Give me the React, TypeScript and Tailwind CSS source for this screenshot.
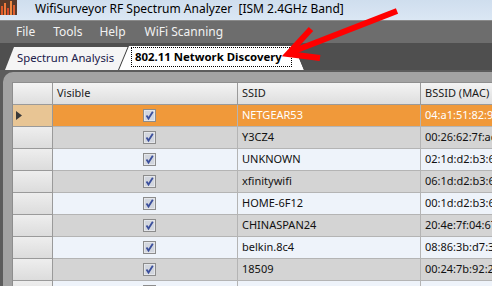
import { Fragment } from 'react';

const rows = [
  { ssid: 'NETGEAR53', bssid: '04:a1:51:82:92:4c' },
  { ssid: 'Y3CZ4', bssid: '00:26:62:7f:ac:1e' },
  { ssid: 'UNKNOWN', bssid: '02:1d:d2:b3:6a:20' },
  { ssid: 'xfinitywifi', bssid: '06:1d:d2:b3:6a:20' },
  { ssid: 'HOME-6F12', bssid: '00:1d:d2:b3:6a:20' },
  { ssid: 'CHINASPAN24', bssid: '20:4e:7f:04:67:8e' },
  { ssid: 'belkin.8c4', bssid: '08:86:3b:d7:38:c4' },
  { ssid: '18509', bssid: '00:24:7b:92:2f:10' },
  { ssid: 'ATT224', bssid: '00:1e:c7:3a:21:90' },
];

function AppIcon() {
  return (
    <svg width="17" height="15" viewBox="0 0 17 15">
      <rect x="0" y="0" width="17" height="15" fill="#5a3a2a" />
      <rect x="1" y="6" width="2" height="9" fill="#e05a2a" />
      <rect x="4" y="3" width="2" height="12" fill="#f07a3a" />
      <rect x="7" y="8" width="2" height="7" fill="#d84a2a" />
      <rect x="10" y="1" width="2" height="14" fill="#f08a40" />
      <rect x="13" y="5" width="2" height="10" fill="#e06030" />
    </svg>
  );
}

function CheckBox() {
  return (
    <svg width="13" height="13" viewBox="0 0 13 13">
      <rect x="0.5" y="0.5" width="12" height="12" fill="#e4e6ea" stroke="#8c8c8c" />
      <rect x="2" y="2" width="9" height="9" fill="#d2d6de" />
      <path d="M3.5 6.5 L5.5 9.5 L9.8 2.8" fill="none" stroke="#3b4f9c" strokeWidth="1.8" />
    </svg>
  );
}

export default function App() {
  return (
    <div className="relative w-[492px] h-[286px] overflow-hidden bg-[#6b6b6b] font-['Noto_Sans',sans-serif] text-[11px]">
      {/* Title bar */}
      <div className="h-[20px] flex items-start bg-gradient-to-b from-[#cfdeee] to-[#dbe7f4]">
        <AppIcon />
        <span className="ml-[18px] mt-[1px] text-[12px] leading-[16px] text-black whitespace-nowrap">
          WifiSurveyor RF Spectrum Analyzer&nbsp;&nbsp;[ISM 2.4GHz Band]
        </span>
      </div>

      {/* Menu bar */}
      <div className="h-[23px] flex items-center bg-[#6d6d6d] text-[#f2f2f2] text-[12px] border-t border-[#8a8a8a]">
        <span className="ml-[16px]">File</span>
        <span className="ml-[18px]">Tools</span>
        <span className="ml-[17px]">Help</span>
        <span className="ml-[19px]">WiFi Scanning</span>
      </div>

      {/* Tab strip */}
      <div className="h-[27px] bg-[#4f4f4f] flex items-end pl-[5px]">
        <div className="w-[124px] h-[23px] bg-[#f5f5f5] [clip-path:polygon(9px_0,100%_0,100%_100%,0_100%)] flex items-center pl-[12px] text-[11.3px] text-[#20204a] whitespace-nowrap">
          Spectrum Analysis
        </div>
        <div className="ml-[-11px] w-[186px] h-[24px] bg-[#3a3a3a] [clip-path:polygon(10px_0,calc(100%-10px)_0,100%_100%,0_100%)] pl-[1px]">
          <div className="w-full h-full bg-white [clip-path:polygon(10px_0,calc(100%-10px)_0,100%_100%,0_100%)] pt-[1px] pl-[12px]">
            <div className="w-[161px] h-[20px] border border-dotted border-black flex items-center pl-[3px] text-[11.4px] font-bold text-black whitespace-nowrap">
              802.11 Network Discovery
            </div>
          </div>
        </div>
      </div>

      {/* Panel */}
      <div className="pt-[2px] pl-[3px] bg-[#5c5c5c]">
        <div className="bg-[#a3a3a3] rounded-tl-[10px] pt-[10px] pl-[9px] h-[220px]">
          <div className="grid grid-cols-[40px_185px_183px_120px] bg-[#a0a0a0] border-t border-l border-[#8e8e8e] text-[11px]">
            <div className="h-[22px] bg-gradient-to-b from-[#f4f4f4] to-[#dedede] border-r border-b border-[#9a9a9a]" />
            <div className="h-[22px] bg-gradient-to-b from-[#f4f4f4] to-[#dedede] border-r border-b border-[#9a9a9a] flex items-center pl-[4px] text-[#1a1a1a]">Visible</div>
            <div className="h-[22px] bg-gradient-to-b from-[#f4f4f4] to-[#dedede] border-r border-b border-[#9a9a9a] flex items-center pl-[4px] text-[#1a1a1a]">SSID</div>
            <div className="h-[22px] bg-gradient-to-b from-[#f4f4f4] to-[#dedede] border-b border-[#9a9a9a] flex items-center pl-[4px] text-[#1a1a1a] whitespace-nowrap">BSSID (MAC)</div>

            {rows.map((r, i) => {
              const selected = i === 0;
              const bg = selected ? 'bg-[#f0993a]' : i % 2 === 1 ? 'bg-[#d4d4d4]' : 'bg-[#eef3fa]';
              const txt = selected ? 'text-white' : 'text-[#111]';
              return (
                <Fragment key={r.ssid}>
                  <div className={`h-[22px] border-r border-b border-[#9a9a9a] flex items-center pl-[3px] ${selected ? 'bg-[#e8c594]' : 'bg-gradient-to-b from-[#eeeeee] to-[#dcdcdc]'}`}>
                    {selected && (
                      <svg width="6" height="9" viewBox="0 0 6 9">
                        <path d="M0 0 L6 4.5 L0 9 Z" fill="#3a3a3a" />
                      </svg>
                    )}
                  </div>
                  <div className={`h-[22px] border-r border-b border-[#b4b4b4] flex items-center justify-center pl-[8px] ${bg}`}>
                    <CheckBox />
                  </div>
                  <div className={`h-[22px] border-r border-b border-[#b4b4b4] flex items-center pl-[4px] ${bg} ${txt}`}>
                    {r.ssid}
                  </div>
                  <div className={`h-[22px] border-b border-[#b4b4b4] flex items-center pl-[4px] whitespace-nowrap overflow-hidden ${bg} ${txt}`}>
                    {r.bssid}
                  </div>
                </Fragment>
              );
            })}
          </div>
        </div>
      </div>

      {/* Red annotation arrow */}
      <svg className="absolute left-0 top-0 pointer-events-none" width="492" height="286" viewBox="0 0 492 286">
        <g stroke="#ff0000" strokeWidth="6" fill="none" strokeLinecap="butt" strokeLinejoin="miter">
          <path d="M397 11 L289 53" />
          <path d="M311 29 L288 54 L320 58" />
        </g>
      </svg>
    </div>
  );
}
